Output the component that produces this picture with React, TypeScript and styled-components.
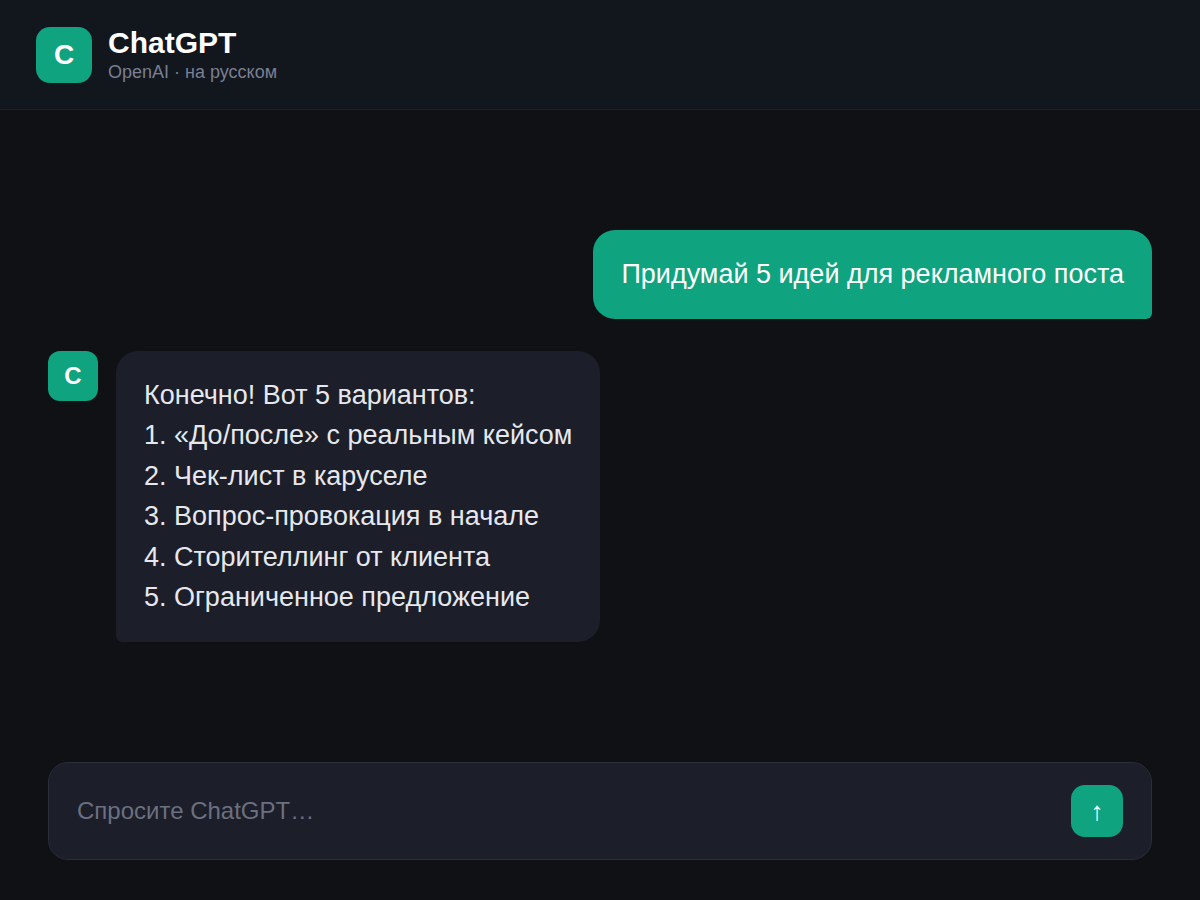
import React from 'react';
import styled, { createGlobalStyle } from 'styled-components';

const GlobalStyle = createGlobalStyle`
  *, *::before, *::after { box-sizing: border-box; }
  body {
    margin: 0;
    background: #0f1115;
    color: #e6e8ee;
    font-family: "Liberation Sans", Arial, sans-serif;
  }
`;

const Page = styled.div`
  min-height: 100vh;
  display: flex;
  flex-direction: column;
`;

const Header = styled.header`
  display: flex;
  align-items: center;
  gap: 16px;
  padding: 26px 36px;
  background: #12161d;
  border-bottom: 1px solid #1e212b;
`;

const Avatar = styled.div<{ $large?: boolean }>`
  flex: none;
  display: flex;
  align-items: center;
  justify-content: center;
  width: ${({ $large }) => ($large ? 56 : 50)}px;
  height: ${({ $large }) => ($large ? 56 : 50)}px;
  border-radius: ${({ $large }) => ($large ? 14 : 12)}px;
  background: #10a37f;
  color: #ffffff;
  font-size: ${({ $large }) => ($large ? 28 : 24)}px;
  font-weight: 700;
`;

const Title = styled.h1`
  margin: 0;
  color: #ffffff;
  font-size: 30px;
  line-height: 34px;
  font-weight: 700;
`;

const Subtitle = styled.p`
  margin: 2px 0 0;
  color: #7a7f92;
  font-size: 18px;
  line-height: 21px;
`;

const Conversation = styled.main`
  flex: 1;
  display: flex;
  flex-direction: column;
  justify-content: center;
  gap: 32px;
  padding: 0 48px;
`;

const Message = styled.div<{ $own?: boolean }>`
  display: flex;
  align-items: flex-start;
  justify-content: ${({ $own }) => ($own ? 'flex-end' : 'flex-start')};
  gap: 18px;
`;

const Bubble = styled.div<{ $own?: boolean }>`
  max-width: 78%;
  padding: 24px 28px;
  border-radius: ${({ $own }) => ($own ? '22px 22px 6px 22px' : '22px 22px 22px 6px')};
  background: ${({ $own }) => ($own ? '#10a37f' : '#1c1e29')};
  color: ${({ $own }) => ($own ? '#ffffff' : '#e6e8ee')};
  font-size: 27px;
  line-height: 1.5;
  white-space: pre-line;
`;

const Composer = styled.form`
  display: flex;
  align-items: center;
  gap: 16px;
  margin: 0 48px 40px;
  padding: 22px 28px;
  background: #1c1e29;
  border: 1px solid #2a2d3a;
  border-radius: 20px;
`;

const Prompt = styled.input`
  flex: 1;
  min-width: 0;
  padding: 0;
  border: 0;
  outline: 0;
  background: transparent;
  color: #e6e8ee;
  font-family: inherit;
  font-size: 24px;
  &::placeholder {
    color: #6b7080;
    opacity: 1;
  }
`;

const SendButton = styled.button`
  flex: none;
  display: flex;
  align-items: center;
  justify-content: center;
  width: 52px;
  height: 52px;
  padding: 0;
  border: 0;
  border-radius: 14px;
  background: #10a37f;
  color: #ffffff;
  font-family: inherit;
  font-size: 26px;
  cursor: pointer;
`;

const reply = [
  'Конечно! Вот 5 вариантов:',
  '1. «До/после» с реальным кейсом',
  '2. Чек-лист в каруселе',
  '3. Вопрос-провокация в начале',
  '4. Сторителлинг от клиента',
  '5. Ограниченное предложение',
].join('\n');

export default function App() {
  return (
    <Page>
      <GlobalStyle />
      <Header>
        <Avatar $large>C</Avatar>
        <div>
          <Title>ChatGPT</Title>
          <Subtitle>OpenAI · на русском</Subtitle>
        </div>
      </Header>
      <Conversation>
        <Message $own>
          <Bubble $own>Придумай 5 идей для рекламного поста</Bubble>
        </Message>
        <Message>
          <Avatar>C</Avatar>
          <Bubble>{reply}</Bubble>
        </Message>
      </Conversation>
      <Composer onSubmit={(event) => event.preventDefault()}>
        <Prompt type="text" aria-label="Сообщение" placeholder="Спросите ChatGPT…" />
        <SendButton type="submit" aria-label="Отправить">↑</SendButton>
      </Composer>
    </Page>
  );
}
